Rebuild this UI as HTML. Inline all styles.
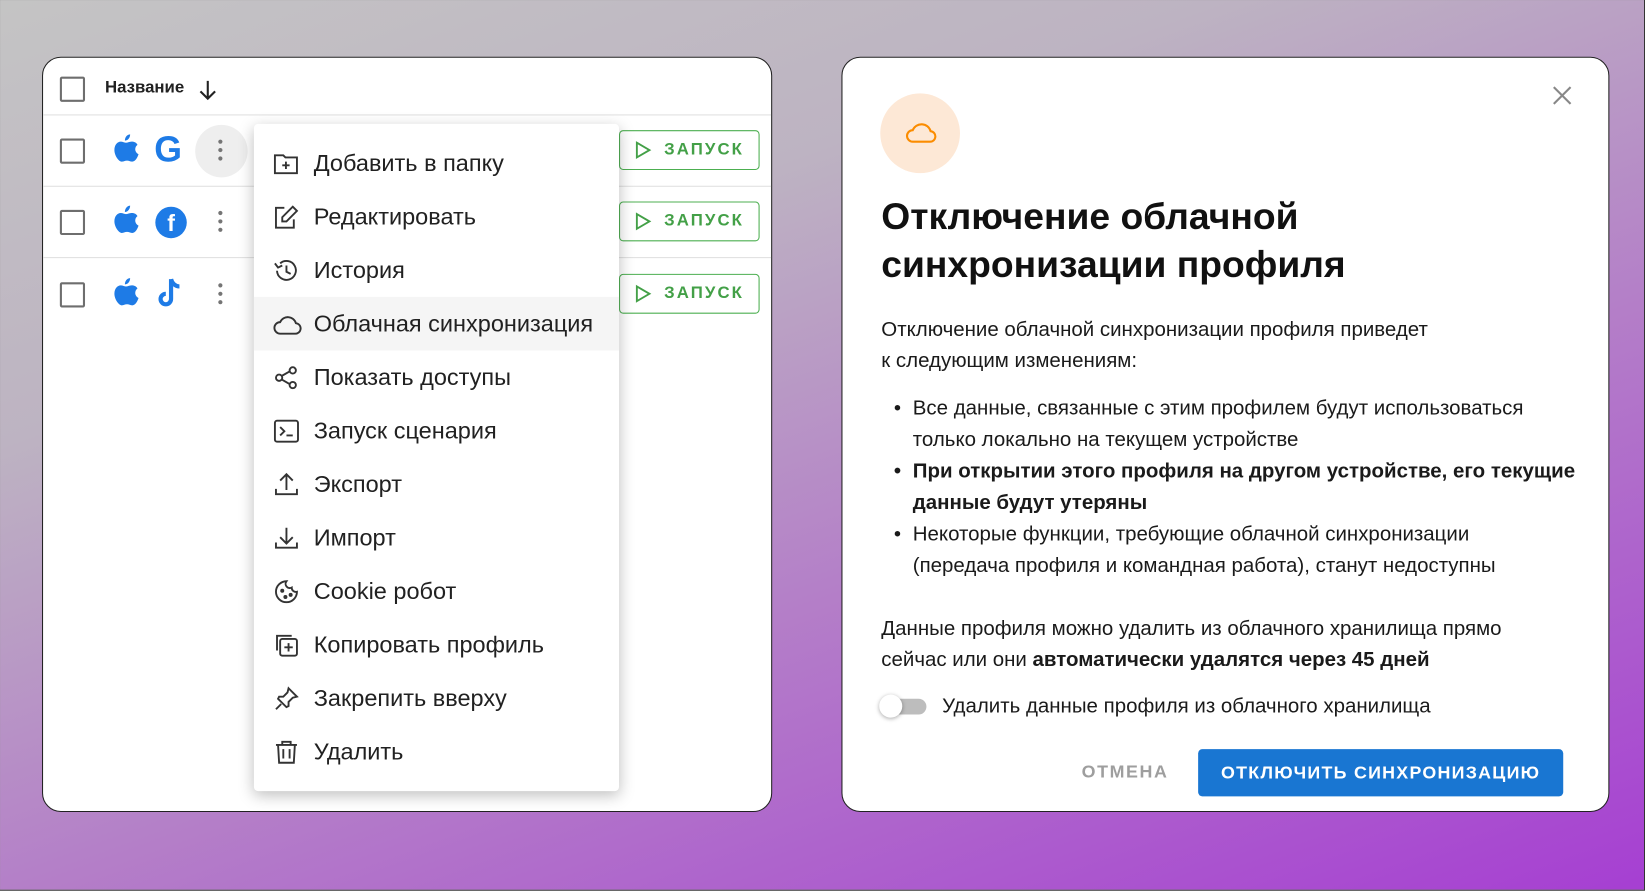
<!DOCTYPE html>
<html><head><meta charset="utf-8">
<style>
html,body{margin:0;padding:0;width:1645px;height:891px;overflow:hidden}
#s{position:absolute;left:-1px;top:-1px;width:1569px;height:850px;transform:scale(1.04911);transform-origin:0 0;
background:linear-gradient(160deg,#c4c4c4 0%,#bdb3c2 30%,#b47fc8 60%,#a63fd2 100%);box-sizing:border-box;border:1px solid #333;font-family:"Liberation Sans",sans-serif;color:#212121}
.card{position:absolute;background:#fff;border:1px solid #222;border-radius:18px;overflow:hidden}
.abs{position:absolute}
.cb{position:absolute;left:57px;width:20px;height:20px;border:2.5px solid #6e6e6e;border-radius:2px}
.hr{position:absolute;left:0;right:0;height:1px;background:#e0e0e0}
.btn{position:absolute;left:590px;width:132px;height:36px;border:1.5px solid #4caf50;border-radius:4px;color:#43a047;font-size:16px;font-weight:bold;letter-spacing:2px;line-height:36px;box-sizing:content-box}
.btn span{position:absolute;left:42px}
.btn svg{position:absolute;left:14px;top:9px}
.menu{position:absolute;left:242px;top:118px;width:348px;height:636px;background:#fff;border-radius:4px;box-shadow:0 4px 14px rgba(0,0,0,.25)}
.it{position:absolute;left:0;right:0;height:51px;font-size:22.4px;line-height:51px}
.it span{position:absolute;left:57px}
.it svg{position:absolute;left:18px;top:13px}
.kb{position:absolute;width:4px;height:4px;border-radius:50%;background:#757575}
p{margin:0}
.t{position:absolute;left:840px;font-size:19.5px;line-height:30px;color:#1a1a1a}
</style></head><body><div id="s">

<div class="card" style="left:40px;top:54px;width:694px;height:718px">
 <div class="cb" style="top:18px;left:16px"></div>
 <div class="abs" style="left:59px;top:20px;font-size:16px;font-weight:bold">Название</div>
 <svg class="abs" style="left:147px;top:20px" width="20" height="22" viewBox="0 0 20 22"><path d="M10 2v17M3 12l7 7 7-7" stroke="#222" stroke-width="2" fill="none"/></svg>
 <div class="hr" style="top:54px"></div>
 <div class="hr" style="top:122px"></div>
 <div class="hr" style="top:190px"></div>
 <div class="cb" style="top:77px;left:16px"></div>
 <div class="cb" style="top:145px;left:16px"></div>
 <div class="cb" style="top:214px;left:16px"></div>
 <div class="abs" style="left:145px;top:64px;width:50px;height:50px;border-radius:50%;background:#eeeeee"></div>
</div>
<svg class="abs" style="left:107px;top:127px" width="26" height="30" viewBox="0 0 26 30"><path d="M17 1c0 3-2 6-5 6 0-3 2-6 5-6zM13 9c2 0 3-1 6-1 2 0 4 1 5 3-3 2-3 7 1 9-1 3-3 7-6 7-2 0-3-1-5-1s-3 1-5 1c-3 0-7-6-7-11 0-5 3-8 6-8 2 0 3 1 5 1z" fill="#1e7be6"/></svg>
<svg class="abs" style="left:107px;top:195px" width="26" height="30" viewBox="0 0 26 30"><path d="M17 1c0 3-2 6-5 6 0-3 2-6 5-6zM13 9c2 0 3-1 6-1 2 0 4 1 5 3-3 2-3 7 1 9-1 3-3 7-6 7-2 0-3-1-5-1s-3 1-5 1c-3 0-7-6-7-11 0-5 3-8 6-8 2 0 3 1 5 1z" fill="#1e7be6"/></svg>
<svg class="abs" style="left:107px;top:264px" width="26" height="30" viewBox="0 0 26 30"><path d="M17 1c0 3-2 6-5 6 0-3 2-6 5-6zM13 9c2 0 3-1 6-1 2 0 4 1 5 3-3 2-3 7 1 9-1 3-3 7-6 7-2 0-3-1-5-1s-3 1-5 1c-3 0-7-6-7-11 0-5 3-8 6-8 2 0 3 1 5 1z" fill="#1e7be6"/></svg>
<div class="abs" style="left:147px;top:124px;font-size:34px;font-weight:bold;color:#1e7be6">G</div>
<div class="abs" style="left:148px;top:197px;width:30px;height:30px;border-radius:50%;background:#1e7be6;color:#fff;font-weight:bold;font-size:22px;text-align:center;line-height:31px">f</div>
<svg class="abs" style="left:149px;top:264px" width="28" height="32" viewBox="0 0 28 32"><path d="M14 2v19a5 5 0 1 1-5-5M14 2c1 4 4 7 8 7" stroke="#1e7be6" stroke-width="4" fill="none"/></svg>
<div class="kb" style="left:208px;top:133px"></div><div class="kb" style="left:208px;top:141px"></div><div class="kb" style="left:208px;top:149px"></div>
<div class="kb" style="left:208px;top:201px"></div><div class="kb" style="left:208px;top:209px"></div><div class="kb" style="left:208px;top:217px"></div>
<div class="kb" style="left:208px;top:270px"></div><div class="kb" style="left:208px;top:278px"></div><div class="kb" style="left:208px;top:286px"></div>

<div class="btn" style="top:124px"><svg width="16" height="18"><path d="M2 2l12 7-12 7z" stroke="#43a047" stroke-width="1.8" fill="none"/></svg><span>ЗАПУСК</span></div>
<div class="btn" style="top:192px"><svg width="16" height="18"><path d="M2 2l12 7-12 7z" stroke="#43a047" stroke-width="1.8" fill="none"/></svg><span>ЗАПУСК</span></div>
<div class="btn" style="top:261px"><svg width="16" height="18"><path d="M2 2l12 7-12 7z" stroke="#43a047" stroke-width="1.8" fill="none"/></svg><span>ЗАПУСК</span></div>

<div class="menu">
<div class="it" style="top:12px"><svg width="26" height="26" viewBox="0 0 26 26" fill="none" stroke="#333" stroke-width="1.8"><path d="M2 5h8l2 2h11v15H2z"/><path d="M12.5 11v7M9 14.5h7"/></svg><span>Добавить в папку</span></div>
<div class="it" style="top:63px"><svg width="26" height="26" viewBox="0 0 26 26" fill="none" stroke="#333" stroke-width="1.8"><path d="M11 4H3v19h17v-8"/><path d="M19 3l4 4-10 10H9v-4z"/></svg><span>Редактировать</span></div>
<div class="it" style="top:114px"><svg width="26" height="26" viewBox="0 0 26 26" fill="none" stroke="#333" stroke-width="1.8"><path d="M4 13a9 9 0 1 0 3-7"/><path d="M2 6l3 4 4-2"/><path d="M13 8v6l4 2"/></svg><span>История</span></div>
<div class="it" style="top:165px;background:#f5f5f5"><svg width="28" height="26" viewBox="0 0 28 26" fill="none" stroke="#333" stroke-width="1.8"><path d="M7 22h14a5 5 0 0 0 1-10 8 8 0 0 0-15-1 5.5 5.5 0 0 0 0 11z"/></svg><span>Облачная синхронизация</span></div>
<div class="it" style="top:216px"><svg width="26" height="26" viewBox="0 0 26 26" fill="none" stroke="#333" stroke-width="1.8"><circle cx="6" cy="13" r="3"/><circle cx="19" cy="6" r="3"/><circle cx="19" cy="20" r="3"/><path d="M9 11l7-4M9 15l7 4"/></svg><span>Показать доступы</span></div>
<div class="it" style="top:267px"><svg width="26" height="26" viewBox="0 0 26 26" fill="none" stroke="#333" stroke-width="1.8"><rect x="2" y="3" width="22" height="20" rx="2"/><path d="M7 9l4 4-4 4M13 17h6"/></svg><span>Запуск сценария</span></div>
<div class="it" style="top:318px"><svg width="26" height="26" viewBox="0 0 26 26" fill="none" stroke="#333" stroke-width="1.8"><path d="M13 18V3M7 9l6-6 6 6M3 17v5h20v-5"/></svg><span>Экспорт</span></div>
<div class="it" style="top:369px"><svg width="26" height="26" viewBox="0 0 26 26" fill="none" stroke="#333" stroke-width="1.8"><path d="M13 3v15M7 12l6 6 6-6M3 17v5h20v-5"/></svg><span>Импорт</span></div>
<div class="it" style="top:420px"><svg width="26" height="26" viewBox="0 0 26 26" fill="none" stroke="#333" stroke-width="1.8"><path d="M13 3a10 10 0 1 0 10 10 4 4 0 0 1-5-4 4 4 0 0 1-5-6z"/><circle cx="9" cy="12" r="1"/><circle cx="12" cy="18" r="1"/><circle cx="17" cy="16" r="1"/></svg><span>Cookie робот</span></div>
<div class="it" style="top:471px"><svg width="26" height="26" viewBox="0 0 26 26" fill="none" stroke="#333" stroke-width="1.8"><rect x="7" y="7" width="16" height="16" rx="2"/><path d="M4 18V4h14M15 11v8M11 15h8"/></svg><span>Копировать профиль</span></div>
<div class="it" style="top:522px"><svg width="26" height="26" viewBox="0 0 26 26" fill="none" stroke="#333" stroke-width="1.8"><path d="M15 3l8 8-4 1-4 4 0 4-2 1-8-8 1-2 4 0 4-4zM8 18l-5 5"/></svg><span>Закрепить вверху</span></div>
<div class="it" style="top:573px"><svg width="26" height="26" viewBox="0 0 26 26" fill="none" stroke="#333" stroke-width="1.8"><path d="M3 6h20M9 6V3h8v3M5 6l1 17h14l1-17M10 10v9M16 10v9"/></svg><span>Удалить</span></div>
</div>

<div class="card" style="left:802px;top:54px;width:730px;height:718px"></div>
<div class="abs" style="left:839px;top:89px;width:76px;height:76px;border-radius:50%;background:#fde8d6"></div>
<svg class="abs" style="left:862px;top:112px" width="32" height="28" viewBox="0 0 32 28" fill="none" stroke="#fb8c00" stroke-width="2"><path d="M8 23h16a5 5 0 0 0 1-10 9 9 0 0 0-17-1 5.5 5.5 0 0 0 0 11z"/></svg>
<svg class="abs" style="left:1479px;top:81px" width="20" height="20"><path d="M2 2l16 16M18 2L2 18" stroke="#888" stroke-width="2"/></svg>
<div class="abs" style="left:840px;top:183px;font-size:35.5px;font-weight:bold;line-height:46px;color:#111">Отключение облачной<br>синхронизации профиля</div>
<div class="t" style="top:299px">Отключение облачной синхронизации профиля приведет<br>к следующим изменениям:</div>
<div class="t" style="top:374px;left:852px">•<br><br><b>•</b><br><br>•</div>
<div class="t" style="top:374px;left:870px">Все данные, связанные с этим профилем будут использоваться<br>только локально на текущем устройстве<br><b>При открытии этого профиля на другом устройстве, его текущие<br>данные будут утеряны</b><br>Некоторые функции, требующие облачной синхронизации<br>(передача профиля и командная работа), станут недоступны</div>
<div class="t" style="top:584px">Данные профиля можно удалить из облачного хранилища прямо<br>сейчас или они <b>автоматически удалятся через 45 дней</b></div>
<div class="abs" style="left:843px;top:666px;width:40px;height:15px;border-radius:8px;background:#bdbdbd"></div>
<div class="abs" style="left:838px;top:662px;width:22px;height:22px;border-radius:50%;background:#fff;box-shadow:0 1px 4px rgba(0,0,0,.35)"></div>
<div class="t" style="top:658px;left:898px">Удалить данные профиля из облачного хранилища</div>
<div class="abs" style="left:1031px;top:726px;font-size:17px;letter-spacing:1.5px;color:#9e9e9e;font-weight:bold">ОТМЕНА</div>
<div class="abs" style="left:1142px;top:714px;width:348px;height:45px;background:#1976d2;border-radius:4px;color:#fff;font-size:17px;letter-spacing:1.2px;text-align:center;line-height:45px;font-weight:bold">ОТКЛЮЧИТЬ СИНХРОНИЗАЦИЮ</div>
</div></body></html>
